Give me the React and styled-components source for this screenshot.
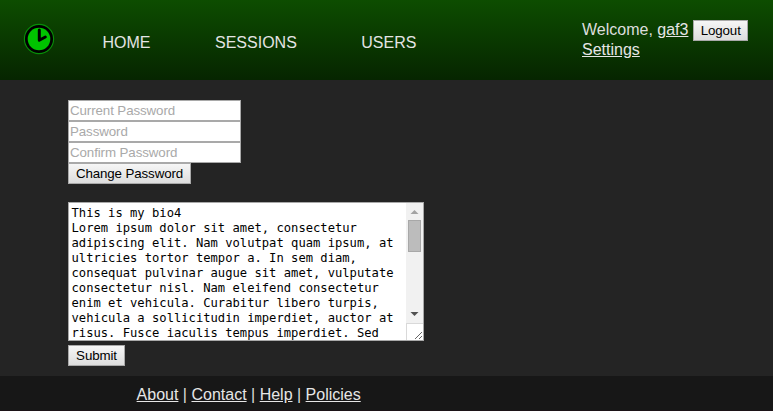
import React from "react";
import styled, { createGlobalStyle } from "styled-components";

const GlobalStyle = createGlobalStyle`
  * { box-sizing: border-box; }
  body {
    margin: 0;
    background: #242424;
    color: #ddd;
    font: 16px/20px "Liberation Sans", Arial, sans-serif;
  }
`;

const Page = styled.div`
  display: flex;
  flex-direction: column;
  height: 411px;
  overflow: hidden;
`;

const Header = styled.header`
  display: flex;
  flex: none;
  height: 80px;
  padding-right: 25px;
  background: linear-gradient(#0d4d00, #062500);
`;

const Logo = styled.svg`
  flex: none;
  width: 32px;
  height: 32px;
  margin: 23px 0 0 23px;
`;

const Nav = styled.nav`
  display: flex;
  gap: 64.5px;
  margin: 33px 0 0 47.5px;
`;

const NavLink = styled.a`
  color: #e4e4e4;
`;

const Account = styled.div`
  width: 166px;
  margin: 20px 0 0 auto;
`;

const AccountRow = styled.div`
  display: flex;
  height: 20px;
  white-space: pre;
`;

const Link = styled.a`
  color: #e6e6e6;
  text-decoration: underline;
`;

const Button = styled.button`
  display: block;
  width: ${(p) => p.$width}px;
  height: 21px;
  padding: 0;
  border: 1px solid #a9a9a9;
  border-radius: 0;
  background: linear-gradient(#f6f6f6, #dddddd);
  color: #000;
  font: 13.333px/18px "Liberation Sans", Arial, sans-serif;
  letter-spacing: -0.12px;
  text-align: center;
`;

const LogoutButton = styled(Button)`
  margin-left: 5px;
`;

const Main = styled.main`
  flex: none;
  height: 296px;
  padding: 20px 68px 0;
`;

const PasswordForm = styled.form`
  display: flex;
  flex-direction: column;
`;

const Field = styled.input`
  width: 173px;
  height: 21px;
  padding: 1px;
  border: 1px solid #a9a9a9;
  border-radius: 0;
  background: #fff;
  font: 13.333px "Liberation Sans", Arial, sans-serif;
  letter-spacing: -0.1px;
  &::placeholder { color: #a9a9a9; opacity: 1; }
`;

const BioForm = styled.form`
  margin-top: 18px;
`;

const BioBox = styled.div`
  display: flex;
  width: 356px;
  height: 139px;
  margin-bottom: 4px;
  border: 1px solid #a9a9a9;
  background: #fff;
`;

const BioText = styled.textarea`
  display: block;
  flex: 1;
  min-width: 0;
  height: 137px;
  padding: 3px 0 0 2.5px;
  border: 0;
  outline: 0;
  resize: none;
  overflow: hidden;
  background: #fff;
  color: #000;
  white-space: pre;
  font: 12.17px/15px "DejaVu Sans Mono", monospace;
`;

const ScrollColumn = styled.div`
  display: flex;
  flex-direction: column;
  width: 17px;
  background: #f1f1f1;
`;

const Arrow = styled.svg`
  display: block;
  width: 17px;
  height: 17px;
`;

const Thumb = styled.div`
  width: 13px;
  height: 32px;
  margin-left: 2px;
  border: 1px solid #a8a8a8;
  background: #bcbcbc;
`;

const Track = styled.div`
  flex: 1;
`;

const Grip = styled.svg`
  display: block;
  width: 17px;
  height: 17px;
  border-top: 1px solid #d9d9d9;
  border-left: 1px solid #d9d9d9;
  background: #fff;
`;

const Footer = styled.footer`
  flex: 1;
  padding: 9px 0 0 136.6px;
  border-bottom: 1px solid #1c1317;
  background: #171717;
`;

const BIO = `This is my bio4
Lorem ipsum dolor sit amet, consectetur
adipiscing elit. Nam volutpat quam ipsum, at
ultricies tortor tempor a. In sem diam,
consequat pulvinar augue sit amet, vulputate
consectetur nisl. Nam eleifend consectetur
enim et vehicula. Curabitur libero turpis,
vehicula a sollicitudin imperdiet, auctor at
risus. Fusce iaculis tempus imperdiet. Sed`;

export default function App() {
  return (
    <>
      <GlobalStyle />
      <Page>
        <Header>
          <Logo viewBox="0 0 32 32">
            <circle cx="16" cy="16" r="14.6" fill="#000" stroke="#089008" strokeWidth="1.1" />
            <circle cx="16" cy="16" r="11.3" fill="#00c400" />
            <path d="M16.3 7v10.2L22.3 14" fill="none" stroke="#000" strokeWidth="3" strokeLinecap="round" strokeLinejoin="round" />
          </Logo>
          <Nav>
            <NavLink>HOME</NavLink>
            <NavLink>SESSIONS</NavLink>
            <NavLink>USERS</NavLink>
          </Nav>
          <Account>
            <AccountRow>
              Welcome, <Link>gaf3</Link>
              <LogoutButton $width={55}>Logout</LogoutButton>
            </AccountRow>
            <AccountRow><Link>Settings</Link></AccountRow>
          </Account>
        </Header>
        <Main>
          <PasswordForm>
            <Field type="password" placeholder="Current Password" />
            <Field type="password" placeholder="Password" />
            <Field type="password" placeholder="Confirm Password" />
            <Button type="button" $width={123}>Change Password</Button>
          </PasswordForm>
          <BioForm>
            <BioBox>
              <BioText defaultValue={BIO} spellCheck={false} />
              <ScrollColumn>
                <Arrow viewBox="0 0 17 17"><path d="M8.5 7L12.5 11h-8z" fill="#a3a3a3" /></Arrow>
                <Thumb />
                <Track />
                <Arrow viewBox="0 0 17 17"><path d="M4.5 6h8L8.5 10z" fill="#505050" /></Arrow>
                <Grip viewBox="0 0 16 16"><path d="M8 15l7-7M12 15l3-3" stroke="#666" strokeWidth="1" /></Grip>
              </ScrollColumn>
            </BioBox>
            <Button type="button" $width={57}>Submit</Button>
          </BioForm>
        </Main>
        <Footer>
          <Link>About</Link> | <Link>Contact</Link> | <Link>Help</Link> | <Link>Policies</Link>
        </Footer>
      </Page>
    </>
  );
}
